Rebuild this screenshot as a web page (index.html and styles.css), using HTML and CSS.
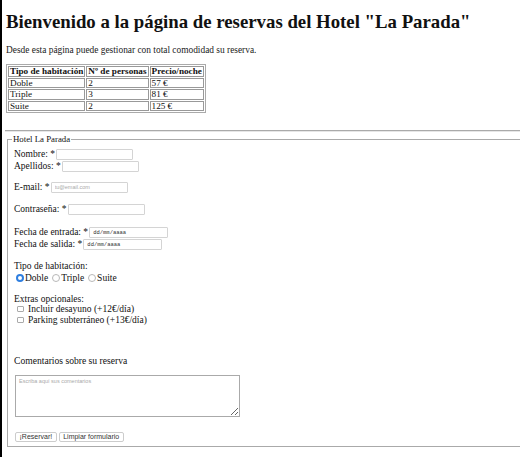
FILE: index.html
```html
<!DOCTYPE html>
<html lang="es">
<head>
<meta charset="utf-8">
<title>Hotel La Parada</title>
<link rel="stylesheet" href="styles.css">
</head>
<body>
<div class="page">
  <h1 class="title">Bienvenido a la página de reservas del Hotel "La Parada"</h1>
  <p class="intro">Desde esta página puede gestionar con total comodidad su reserva.</p>
  <table class="rooms">
    <tr><th>Tipo de habitación</th><th>Nº de personas</th><th>Precio/noche</th></tr>
    <tr><td>Doble</td><td>2</td><td>57 €</td></tr>
    <tr><td>Triple</td><td>3</td><td>81 €</td></tr>
    <tr><td>Suite</td><td>2</td><td>125 €</td></tr>
  </table>
  <hr class="rule">
  <form class="form">
    <fieldset class="box">
      <legend class="legend">Hotel La Parada</legend>
      <div class="line">Nombre: *<input class="field" type="text"></div>
      <div class="line">Apellidos: *<input class="field" type="text"></div>
      <div class="line gap9">E-mail: *<input class="field" type="text" placeholder="tu@email.com"></div>
      <div class="line gap10">Contraseña: *<input class="field" type="password"></div>
      <div class="line gap11">Fecha de entrada: *<input class="field date" type="text" placeholder="dd/mm/aaaa"></div>
      <div class="line">Fecha de salida: *<input class="field date" type="text" placeholder="dd/mm/aaaa"></div>
      <div class="line gap10">Tipo de habitación:</div>
      <div class="line radios">
        <label class="opt"><span class="radio on"></span>Doble</label>
        <label class="opt"><span class="radio"></span>Triple</label>
        <label class="opt"><span class="radio"></span>Suite</label>
      </div>
      <div class="line gap10">Extras opcionales:</div>
      <label class="line check"><span class="box-check"></span>Incluir desayuno (+12€/día)</label>
      <label class="line check"><span class="box-check"></span>Parking subterráneo (+13€/día)</label>
      <div class="line comments">Comentarios sobre su reserva</div>
      <textarea class="area" placeholder="Escriba aquí sus comentarios"></textarea>
      <div class="buttons">
        <button class="btn" type="button">¡Reservar!</button>
        <button class="btn" type="button">Limpiar formulario</button>
      </div>
    </fieldset>
  </form>
</div>
</body>
</html>
```
FILE: styles.css
```css
html, body {
  margin: 0;
  padding: 0;
  background: #fff;
  overflow: hidden;
}
body {
  font-family: "Liberation Serif", "Times New Roman", serif;
  color: #111;
}
.page {
  border-left: 2px solid #000;
  height: 457px;
  padding: 11px 0 0 4px;
  box-sizing: border-box;
}
.title {
  font-size: 18.8px;
  font-weight: bold;
  margin: 0;
  line-height: 22px;
  white-space: nowrap;
}
.intro {
  font-size: 9.4px;
  margin: 12px 0 0;
  line-height: 11px;
  color: #222;
}
.rooms {
  margin-top: 8px;
  border: 1px solid #aaa;
  border-spacing: 1px;
  font-size: 9.2px;
  line-height: 8.5px;
  white-space: nowrap;
}
.rooms th, .rooms td {
  border: 1px solid #999;
  padding: 0 1px;
  text-align: left;
}
.rooms th {
  font-weight: bold;
}
.rule {
  margin: 17px -20px 0 -1px;
  border: 0;
  border-top: 1px solid #aaa;
  border-bottom: 1px solid #e6e6e6;
  height: 0;
}
.form {
  margin: 0;
}
.box {
  margin: 1px -30px 0 1px;
  padding: 3px 6px 4px;
  border: 1px solid #aaa;
  font-size: 9.5px;
  line-height: 12px;
}
.legend {
  padding: 0 1px;
  margin-left: -2px;
  font-size: 8.8px;
  line-height: 12px;
}
.line {
  display: flex;
  align-items: center;
  white-space: nowrap;
  height: 12px;
}
.gap9 { margin-top: 9px; }
.gap10 { margin-top: 10px; }
.gap11 { margin-top: 11px; }
.field {
  margin: 0 0 0 1px;
  width: 77px;
  height: 11px;
  box-sizing: border-box;
  border: 1px solid #d4d4d4;
  border-radius: 1px;
  padding: 0 3px;
  font-family: "Liberation Sans", Arial, sans-serif;
  font-size: 5.5px;
}
.field::placeholder {
  color: #aaa;
}
.date {
  width: 79px;
  font-family: "Liberation Mono", monospace;
  font-size: 5.5px;
}
.date::placeholder {
  color: #333;
}
.radios {
  gap: 4px;
  margin-left: 2px;
  height: 11px;
}
.opt {
  display: flex;
  align-items: center;
}
.radio {
  width: 8px;
  height: 8px;
  border-radius: 50%;
  border: 1px solid #b8b8b8;
  margin-right: 1px;
  box-sizing: border-box;
}
.radio.on {
  border: 2.5px solid #2f7fe0;
  background: #fff;
}
.check {
  margin-left: 3px;
  height: 10.5px;
}
.gap10 + .check {
  margin-top: -1px;
}
.box-check {
  width: 7px;
  height: 6px;
  border: 1px solid #aaa;
  border-radius: 1px;
  box-sizing: border-box;
  margin-right: 4px;
}
.comments {
  margin-top: 30px;
  font-size: 9.6px;
}
.area {
  display: block;
  margin: 8px 0 0 1px;
  width: 225px;
  height: 42px;
  box-sizing: border-box;
  border: 1px solid #aaa;
  padding: 2px 3px;
  font-family: "Liberation Sans", Arial, sans-serif;
  font-size: 5.5px;
  resize: both;
}
.area::placeholder {
  color: #aaa;
}
.buttons {
  display: flex;
  gap: 2px;
  margin: 15px 0 0 1px;
}
.btn {
  height: 10px;
  padding: 0 3.5px;
  border: 1px solid #ccc;
  border-radius: 2px;
  background: #fff;
  font-family: "Liberation Sans", Arial, sans-serif;
  font-size: 7px;
  color: #333;
  line-height: 8px;
}
```
